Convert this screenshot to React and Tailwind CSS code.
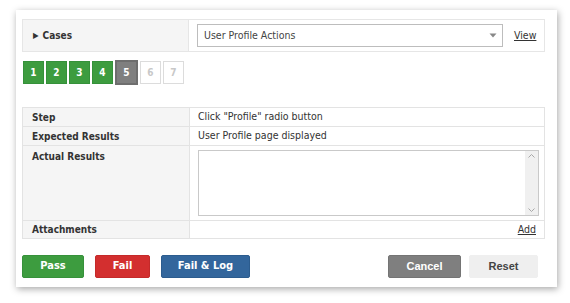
const FONT = { fontFamily: 'Tahoma, "DejaVu Sans Condensed", "DejaVu Sans", sans-serif' };
const ARIAL = { fontFamily: '"Liberation Sans", Arial, sans-serif' };

const STEPS = [
    { n: 1, state: 'done' },
    { n: 2, state: 'done' },
    { n: 3, state: 'done' },
    { n: 4, state: 'done' },
    { n: 5, state: 'current' },
    { n: 6, state: 'todo' },
    { n: 7, state: 'todo' },
];

const STEP_STYLES = {
    done: 'w-[21px] h-[23px] bg-[#3d9c3f] border border-[#35913a] text-white',
    current: 'w-[23px] h-[25px] -my-px bg-[#7f7f7f] border-2 border-[#6e6e6e] text-white',
    todo: 'w-[21px] h-[23px] bg-white border border-[#dcdcdc] text-[#c8c8c8]',
};

export default function App() {
    return (
        <div className="w-[570px] h-[303px] bg-white pt-[10px] pl-[16px] text-[10.5px] text-[#333]" style={FONT}>
            <div className="w-[541px] h-[277px] bg-white shadow-[1px_2px_7px_rgba(0,0,0,0.35)] pt-[9px] pl-[6px] pr-[12px] flex flex-col">
                <div className="flex h-[33px] border border-[#e6e6e6]">
                    <div className="w-[166px] bg-[#f5f5f5] border-r border-[#e6e6e6] flex items-center pl-[10px] font-bold text-[10px]">
                        <span className="text-[8px] mr-[4px]">▶</span>
                        Cases
                    </div>
                    <div className="flex-1 flex items-center pl-[8px]">
                        <div className="w-[306px] h-[23px] border border-[#bdbdbd] flex items-center pl-[6px] pr-[4px]">
                            <span className="flex-1 text-[#444]">User Profile Actions</span>
                            <svg width="8" height="5" viewBox="0 0 8 5" className="mr-[1px]">
                                <path d="M0.5 0.5 L7.5 0.5 L4 4.5 Z" fill="#888" />
                            </svg>
                        </div>
                        <a className="ml-[11px] underline text-[#333]">View</a>
                    </div>
                </div>

                <div className="flex items-center gap-[2px] mt-[9px] ml-px h-[23px]">
                    {STEPS.map((s) => (
                        <div key={s.n} className={`flex items-center justify-center font-bold text-[10px] ${STEP_STYLES[s.state]}`}>
                            {s.n}
                        </div>
                    ))}
                </div>

                <table className="mt-[23px] w-full border-collapse">
                    <tbody>
                        <Row label="Step">Click "Profile" radio button</Row>
                        <Row label="Expected Results">User Profile page displayed</Row>
                        <tr>
                            <td className="w-[167px] h-[75px] bg-[#f5f5f5] border border-[#e3e3e3] font-bold text-[10px] pl-[9px] pt-[3px] align-top">
                                Actual Results
                            </td>
                            <td className="border border-[#e3e3e3] pl-[8px] pr-[5px] py-[3px]">
                                <div className="h-[66px] border border-[#c9c9c9] flex">
                                    <div className="flex-1" />
                                    <div className="w-[13px] bg-[#f0f0f0] flex flex-col justify-between items-center py-[3px]">
                                        <svg width="7" height="4" viewBox="0 0 7 4">
                                            <path d="M0.5 3.5 L3.5 0.5 L6.5 3.5" fill="none" stroke="#a8a8a8" />
                                        </svg>
                                        <svg width="7" height="4" viewBox="0 0 7 4">
                                            <path d="M0.5 0.5 L3.5 3.5 L6.5 0.5" fill="none" stroke="#a8a8a8" />
                                        </svg>
                                    </div>
                                </div>
                            </td>
                        </tr>
                        <tr>
                            <td className="w-[167px] h-[18px] bg-[#f5f5f5] border border-[#e3e3e3] font-bold text-[10px] pl-[9px]">Attachments</td>
                            <td className="border border-[#e3e3e3] text-right pr-[8px]">
                                <a className="underline">Add</a>
                            </td>
                        </tr>
                    </tbody>
                </table>

                <div className="flex items-center mt-[16px] h-[23px]">
                    <Btn className="w-[62px] bg-[#3d9c3f] border-[#36913a] text-white">Pass</Btn>
                    <Btn className="w-[55px] ml-[11px] bg-[#d32f2f] border-[#c42a2a] text-white">Fail</Btn>
                    <Btn className="w-[89px] ml-[11px] bg-[#33669c] border-[#2c5c8e] text-white">Fail &amp; Log</Btn>
                    <div className="flex-1" />
                    <Btn className="w-[73px] bg-[#7f7f7f] border-[#747474] text-white" style={ARIAL}>Cancel</Btn>
                    <Btn className="w-[69px] ml-[8px] mr-[7px] bg-[#efefef] border-[#efefef] text-[#444]" style={ARIAL}>Reset</Btn>
                </div>
            </div>
        </div>
    );
}

function Row({ label, children }) {
    return (
        <tr>
            <td className="w-[167px] h-[19px] bg-[#f5f5f5] border border-[#e3e3e3] font-bold text-[10px] pl-[9px]">{label}</td>
            <td className="border border-[#e3e3e3] pl-[8px]">{children}</td>
        </tr>
    );
}

function Btn({ className, style, children }) {
    return (
        <button className={`h-[23px] border rounded-[2px] font-bold text-[11px] ${className}`} style={style}>
            {children}
        </button>
    );
}
